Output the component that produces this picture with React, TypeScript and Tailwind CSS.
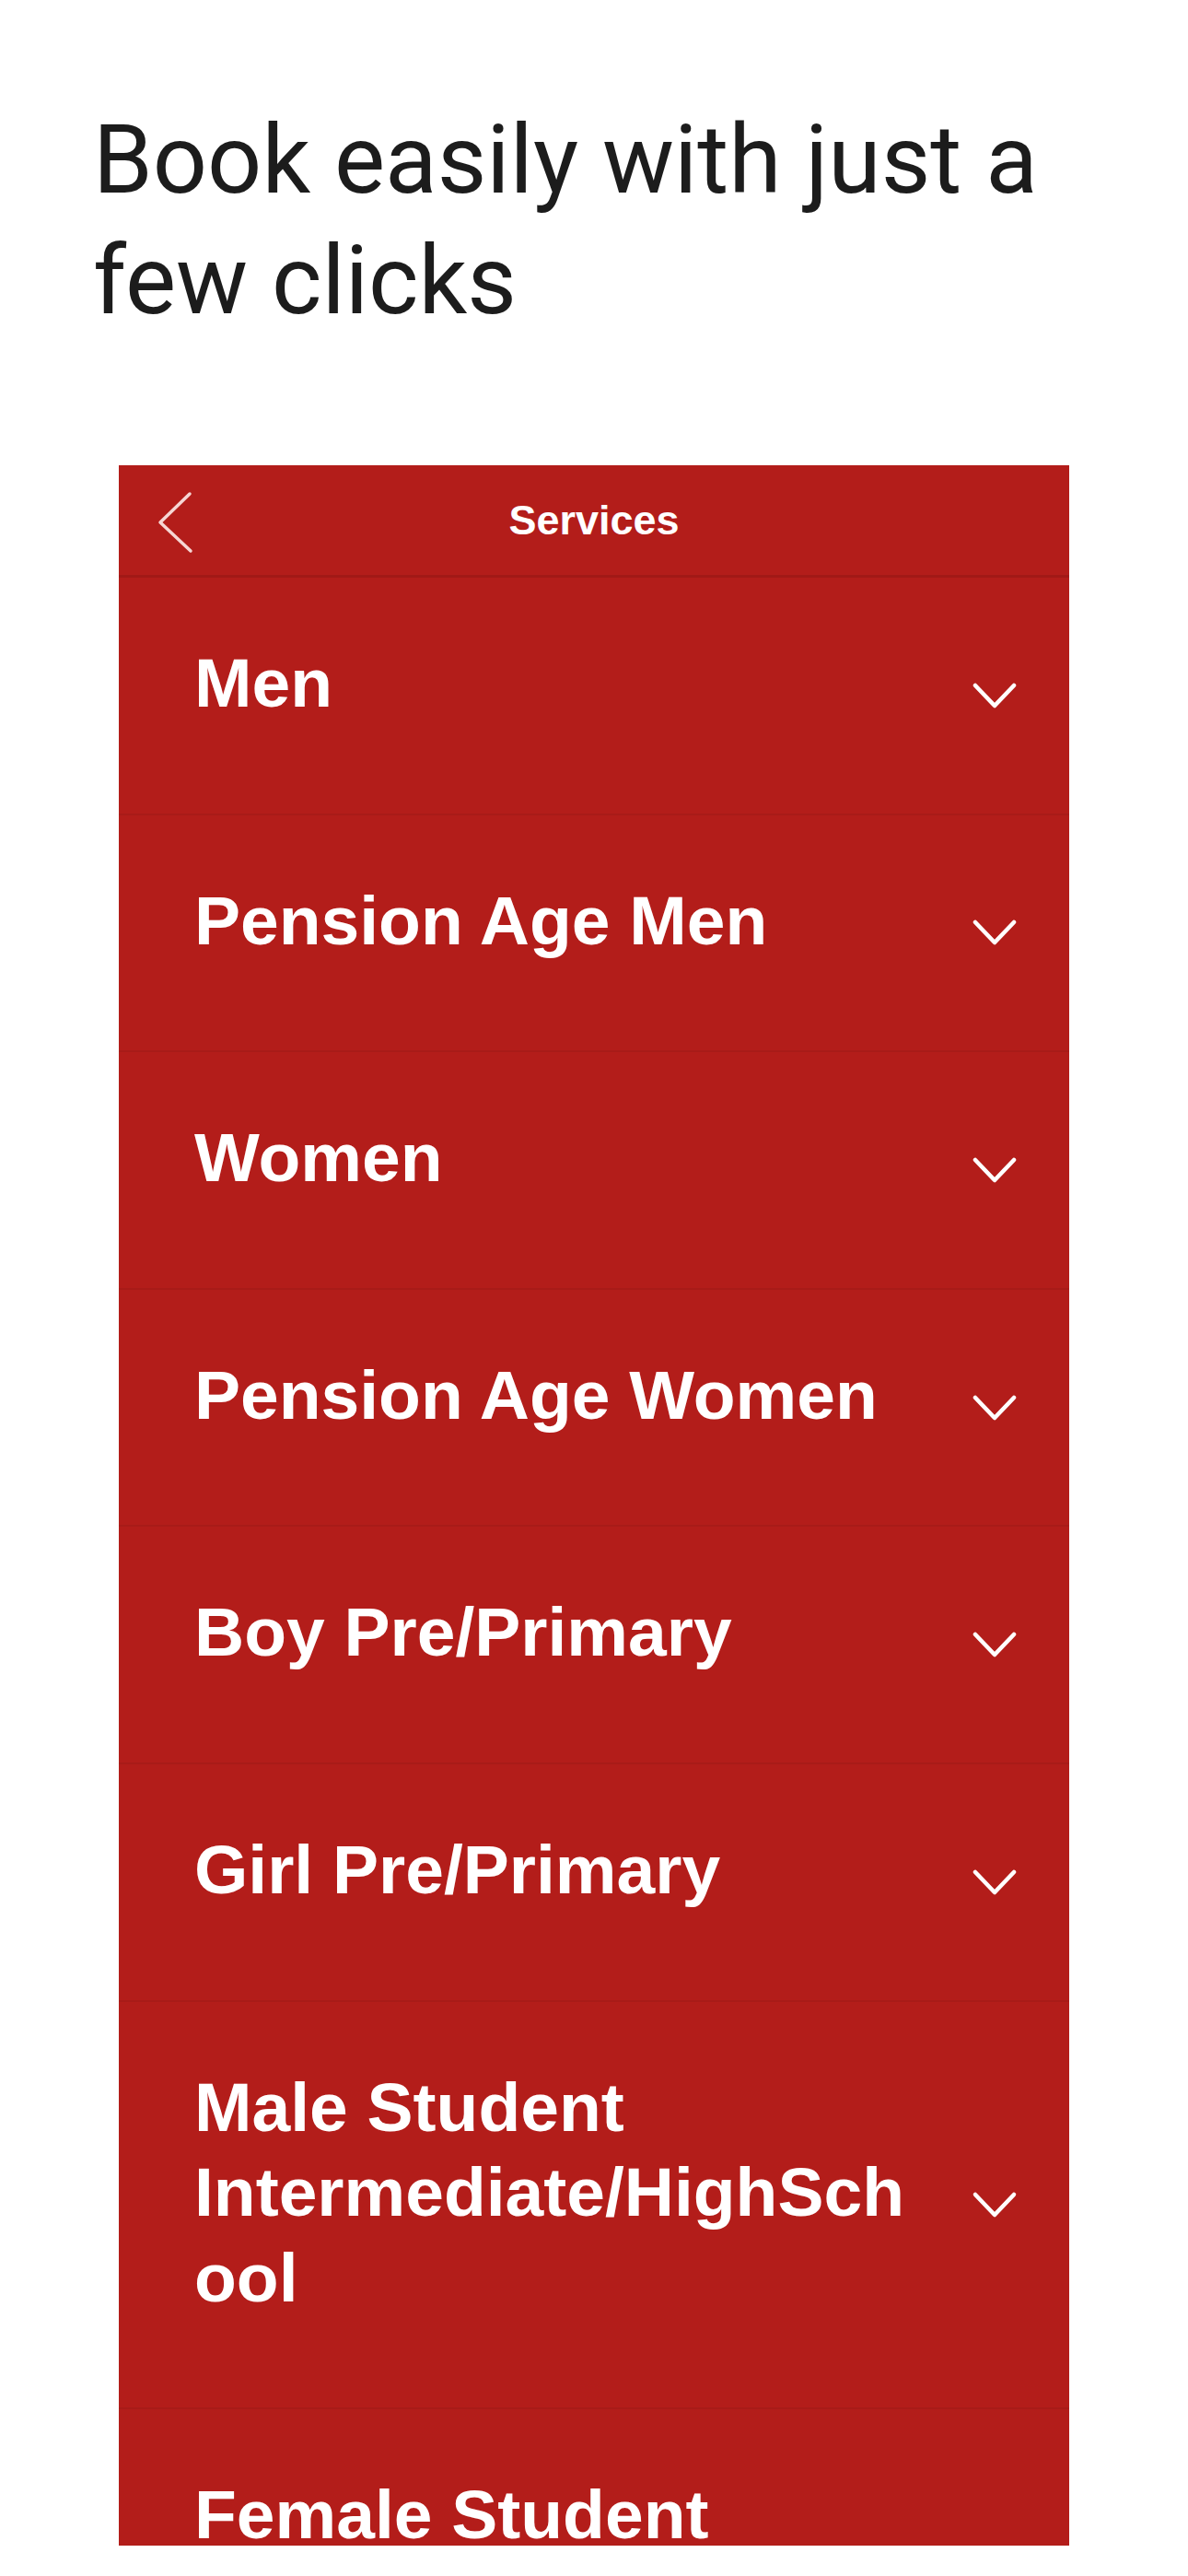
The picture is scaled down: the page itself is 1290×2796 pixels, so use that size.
const services = [
  "Men",
  "Pension Age Men",
  "Women",
  "Pension Age Women",
  "Boy Pre/\u2060Primary",
  "Girl Pre/\u2060Primary",
  "Male Student Intermediate/\u2060HighSchool",
  "Female Student Intermediate/\u2060HighSchool",
]

function ChevronDown() {
  return (
    <svg viewBox="0 0 50 30" className="w-[50px] h-[30px] shrink-0 ml-[50px]" fill="none">
      <polyline
        points="4,4 25,26 46,4"
        stroke="white"
        strokeWidth="4.5"
        strokeLinecap="round"
        strokeLinejoin="round"
      />
    </svg>
  )
}

function ChevronLeft() {
  return (
    <svg viewBox="0 0 40 70" className="w-[40px] h-[70px] mt-[5px]" fill="none">
      <polyline
        points="36,4 4,35 37,66"
        stroke="#f6d6d4"
        strokeWidth="3.5"
        strokeLinecap="round"
        strokeLinejoin="round"
      />
    </svg>
  )
}

export default function App() {
  return (
    <div className="w-[1290px] h-[2796px] bg-white overflow-hidden">
      <h1 className="pt-[108px] pl-[101px] pr-[100px] font-['Roboto',sans-serif] font-normal text-[104px] leading-[131px] text-[#1c1c1c]">
        Book easily with just a few clicks
      </h1>

      <div className="mt-[135px] mx-auto w-[1032px] h-[2258px] overflow-hidden bg-[#b31d1a] font-['Liberation_Sans',Arial,sans-serif] text-white">
        <div className="grid grid-cols-[1fr_auto_1fr] items-center h-[122px] border-b-[3px] border-[#a11916]">
          <div className="flex pl-[41px]">
            <ChevronLeft />
          </div>
          <div className="text-[45px] font-bold leading-none">Services</div>
          <div />
        </div>

        {services.map((label) => (
          <div
            key={label}
            className="flex items-center pl-[82px] pr-[56px] border-b-2 border-[#a81b18]"
          >
            <div className="flex-1 min-w-0 pt-[68px] pb-[95px] text-[75px] font-bold leading-[92.6px] [overflow-wrap:anywhere]">
              {label}
            </div>
            <ChevronDown />
          </div>
        ))}
      </div>
    </div>
  )
}
